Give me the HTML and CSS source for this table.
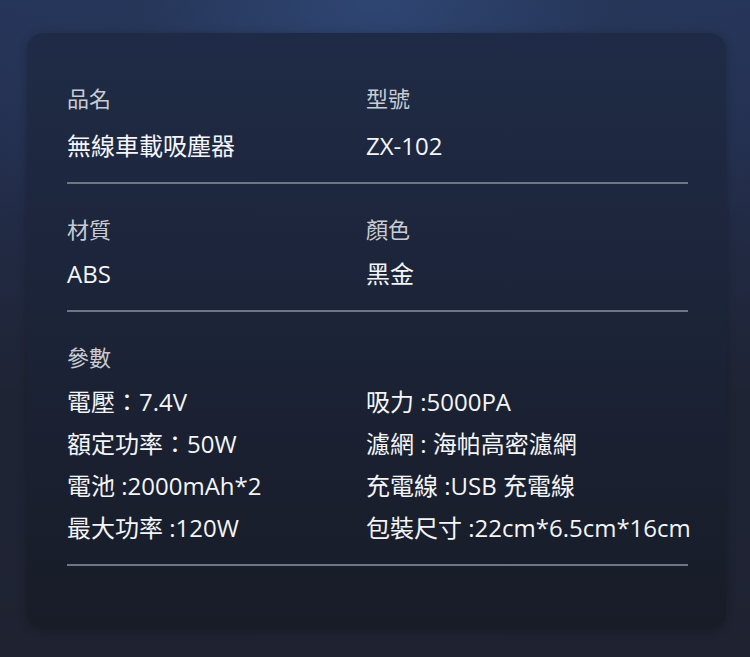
FILE: index.html
```html
<!DOCTYPE html>
<html lang="zh-Hant">
<head>
    <meta charset="UTF-8">
    <meta name="viewport" content="width=device-width, initial-scale=1.0">
    <title>產品規格</title>
    <link rel="stylesheet" href="styles.css">
</head>
<body>
    <div class="card">
        <div class="section">
            <div class="col">
                <div class="label">品名</div>
                <div class="value">無線車載吸塵器</div>
            </div>
            <div class="col">
                <div class="label">型號</div>
                <div class="value">ZX-102</div>
            </div>
        </div>
        <div class="section">
            <div class="col">
                <div class="label">材質</div>
                <div class="value">ABS</div>
            </div>
            <div class="col">
                <div class="label">顏色</div>
                <div class="value">黑金</div>
            </div>
        </div>
        <div class="section">
            <div class="col">
                <div class="label">參數</div>
                <div class="value">電壓：7.4V</div>
                <div class="value">額定功率：50W</div>
                <div class="value">電池 :2000mAh*2</div>
                <div class="value">最大功率 :120W</div>
            </div>
            <div class="col">
                <div class="label">&nbsp;</div>
                <div class="value">吸力 :5000PA</div>
                <div class="value">濾網 : 海帕高密濾網</div>
                <div class="value">充電線 :USB 充電線</div>
                <div class="value">包裝尺寸 :22cm*6.5cm*16cm</div>
            </div>
        </div>
    </div>
</body>
</html>
```

FILE: styles.css
```css
html, body {
    margin: 0;
    height: 100%;
}
body {
    font-family: "Open Sans", "Noto Sans CJK TC", sans-serif;
    background: radial-gradient(ellipse 70% 45% at 50% 0%, #2f4673 0%, #263659 45%, rgba(30, 36, 52, 0) 100%),
                linear-gradient(#26345a, #1f2435 60%, #1e2231);
    padding: 33px 24px 29px 27px;
    box-sizing: border-box;
    overflow: hidden;
}
.card {
    background: linear-gradient(#1f2b46, #1c2439 45%, #181c27);
    border-radius: 16px;
    padding: 20px 38px 62px 40px;
    box-shadow: 0 2px 10px rgba(0, 0, 0, 0.25);
}
.section {
    display: grid;
    grid-template-columns: 299px 1fr;
    padding: 24px 0 15px;
    border-bottom: 2px solid #6f7582;
}
.label {
    font-size: 22px;
    line-height: 42px;
    color: #c9ccd2;
    margin-bottom: 3px;
}
.section:first-child .label {
    margin-bottom: 6px;
}
.value {
    font-size: 24px;
    line-height: 42px;
    color: #f4f5f7;
    white-space: nowrap;
}
```
